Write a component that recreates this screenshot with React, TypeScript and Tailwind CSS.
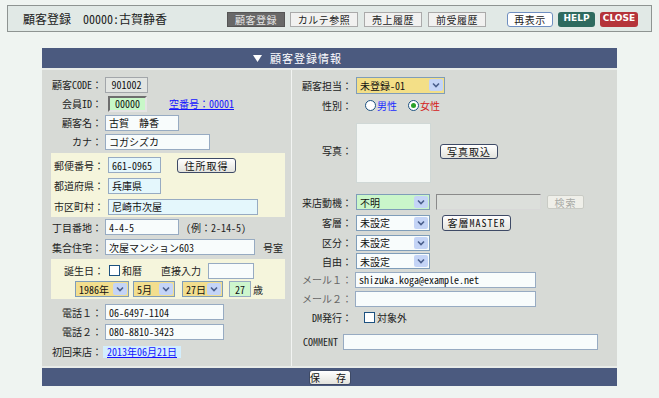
import { FC, ReactNode } from 'react';

type P = { className?: string; children?: ReactNode };

// 入力欄（表示のみ）
const Box: FC<P> = ({ className = '', children }) => (
  <div
    className={`flex h-[16px] items-center overflow-hidden whitespace-nowrap border px-[3px] text-[10px] text-[#111] ${className}`}
  >
    {children}
  </div>
);

// セレクトボックス（XP風）
const Select: FC<P> = ({ className = '', children }) => (
  <div className={`flex h-[16px] items-center border border-[#7f9db9] ${className}`}>
    <span className="flex-1 overflow-hidden whitespace-nowrap pl-[3px] text-[10px] text-[#111]">{children}</span>
    <span className="mr-px flex h-[12px] w-[14px] items-center justify-center rounded-[2px] bg-[#c4d4f6]">
      <svg width="8" height="6" viewBox="0 0 8 6">
        <path d="M1 1.5l3 3 3-3" stroke="#4a5f8c" strokeWidth="1.6" fill="none" />
      </svg>
    </span>
  </div>
);

const Btn: FC<P> = ({ className = '', children }) => (
  <div
    className={`flex h-[15px] items-center justify-center rounded-[3px] border border-[#3e4a66] bg-linear-to-b from-white to-[#e3e3dd] text-[10px] tracking-[1px] text-[#111] ${className}`}
  >
    {children}
  </div>
);

const Radio: FC<{ checked?: boolean }> = ({ checked }) => (
  <span className="flex h-[11px] w-[11px] items-center justify-center rounded-full border border-[#1c5180] bg-white">
    {checked && <span className="h-[5px] w-[5px] rounded-full bg-[#2aa12a]" />}
  </span>
);

const Check: FC<{ className?: string }> = ({ className = '' }) => (
  <span className={`h-[11px] w-[11px] border border-[#1c5180] bg-white ${className}`} />
);

// 左カラムの行
const LRow: FC<P & { label: string }> = ({ label, className = '', children }) => (
  <div className={`flex items-center ${className}`}>
    <div className="w-[60px] whitespace-nowrap text-right">{label}</div>
    <div className="ml-[3px] flex items-center">{children}</div>
  </div>
);

// 住所・誕生日ブロック内の行
const CRow: FC<P & { label: string }> = ({ label, className = '', children }) => (
  <div className={`flex items-center ${className}`}>
    <div className="w-[53px] whitespace-nowrap text-right">{label}</div>
    <div className="ml-[4px] flex items-center">{children}</div>
  </div>
);

// 右カラムの行
const RRow: FC<P & { label: string }> = ({ label, className = '', children }) => (
  <div className={`flex items-center ${className}`}>
    <div className="w-[60px] whitespace-nowrap text-right">{label}</div>
    <div className="ml-[4px] flex items-center">{children}</div>
  </div>
);

const inputBorder = 'border-[#97abc2] bg-[#f8fcfc]';

export default function App() {
  return (
    <div className="min-h-screen bg-[#eff4f1] pt-[5px] font-['Noto_Sans_Mono_CJK_JP','Noto_Sans_CJK_JP',sans-serif] text-[10px] text-[#222]">
      {/* ヘッダーバー */}
      <div className="mx-[7px] flex h-[27px] items-center border border-[#8e9492] bg-[#e1e9e6] pl-[15px] pr-[13px]">
        <span className="whitespace-nowrap text-[12px] text-[#222]">顧客登録　00000:古賀静香</span>
        <div className="ml-auto flex items-center pt-px text-[10px] tracking-[0.5px]">
          <div className="flex h-[15px] w-[58px] items-center justify-center border border-[#555] bg-[#686868] text-[#e6e6e6]">顧客登録</div>
          <div className="ml-[5px] flex h-[15px] w-[68px] items-center justify-center border border-[#aaa] bg-[#f1f1f0]">カルテ参照</div>
          <div className="ml-[6px] flex h-[15px] w-[58px] items-center justify-center border border-[#aaa] bg-[#f1f1f0]">売上履歴</div>
          <div className="ml-[6px] flex h-[15px] w-[58px] items-center justify-center border border-[#aaa] bg-[#f1f1f0]">前受履歴</div>
          <div className="ml-[21px] flex h-[15px] w-[46px] items-center justify-center rounded-[3px] border border-[#6f8fc0] bg-white">再表示</div>
          <div className="ml-[5px] flex h-[15px] w-[37px] items-center justify-center rounded-[3px] bg-[#2e6a5f] font-['DejaVu_Sans',sans-serif] text-[9px] font-bold tracking-normal text-white">HELP</div>
          <div className="ml-[5px] flex h-[15px] w-[38px] items-center justify-center rounded-[3px] bg-[#b5343a] font-['DejaVu_Sans',sans-serif] text-[9px] font-bold tracking-normal text-white">CLOSE</div>
        </div>
      </div>

      {/* 顧客登録情報パネル */}
      <div className="ml-[42px] mt-[16px] w-[575px]">
        <div className="flex h-[20px] items-center bg-[#4b5a7f] pl-[211px] text-[11px] tracking-[1px] text-white">
          <svg width="9" height="7" viewBox="0 0 9 7">
            <path d="M0 0h9L4.5 7z" fill="white" />
          </svg>
          <span className="ml-[8px]">顧客登録情報</span>
        </div>

        <div className="flex h-[298px] border-t-2 border-[#e8ebe8] bg-[#d7dad6]">
          {/* 左カラム */}
          <div className="w-[250px] border-r border-[#f2f4f2] pt-[5px]">
            <LRow label="顧客CODE：" className="h-[19px]">
              <Box className="w-[43px] justify-center border-[#a2a6aa] bg-[#e2e5e2]">901002</Box>
            </LRow>
            <LRow label="会員ID：" className="h-[19px]">
              <div className="ml-[3px] flex h-[16px] w-[39px] items-center justify-center border-2 border-b-[#e4e4e4] border-l-[#6e6e6e] border-r-[#e4e4e4] border-t-[#6e6e6e] bg-[#c8f8c8] text-[10px] text-[#111]">
                00000
              </div>
              <span className="ml-[22px] whitespace-nowrap text-[#1414ff] underline">空番号：00001</span>
            </LRow>
            <LRow label="顧客名：" className="h-[19px]">
              <Box className={`w-[74px] ${inputBorder}`}>古賀　静香</Box>
            </LRow>
            <LRow label="カナ：" className="h-[19px]">
              <Box className={`w-[105px] ${inputBorder}`}>コガシズカ</Box>
            </LRow>

            {/* 住所 */}
            <div className="ml-[9px] mt-[2px] w-[234px] bg-[#f5f5dc] pt-[2px]">
              <CRow label="郵便番号：" className="h-[20px]">
                <Box className="w-[53px] border-[#97abc2] bg-[#e4f7fc]">661-0965</Box>
                <Btn className="ml-[16px] w-[59px]">住所取得</Btn>
              </CRow>
              <CRow label="都道府県：" className="h-[21px]">
                <Box className="w-[53px] border-[#97abc2] bg-[#e4f7fc]">兵庫県</Box>
              </CRow>
              <CRow label="市区町村：" className="h-[21px]">
                <Box className="w-[150px] border-[#97abc2] bg-[#e4f7fc]">尼崎市次屋</Box>
              </CRow>
            </div>

            <LRow label="丁目番地：" className="h-[20px]">
              <Box className={`w-[74px] ${inputBorder}`}>4-4-5</Box>
              <span className="ml-[7px] whitespace-nowrap">(例：2-14-5)</span>
            </LRow>
            <LRow label="集合住宅：" className="h-[20px]">
              <Box className={`w-[150px] ${inputBorder}`}>次屋マンション603</Box>
              <span className="ml-[8px]">号室</span>
            </LRow>

            {/* 誕生日 */}
            <div className="ml-[9px] mt-[2px] w-[234px] bg-[#f5f5dc] pb-px pt-[2px]">
              <div className="flex h-[19px] items-center">
                <div className="w-[53px] text-right">誕生日：</div>
                <Check className="ml-[5px]" />
                <span className="ml-[2px]">和暦</span>
                <span className="ml-[19px]">直接入力</span>
                <Box className={`ml-[7px] h-[15px] w-[46px] ${inputBorder}`} />
              </div>
              <div className="flex h-[18px] items-center pl-[24px]">
                <Select className="w-[54px] bg-[#f2de8e]">1986年</Select>
                <Select className="ml-[4px] w-[42px] bg-[#f2de8e]">5月</Select>
                <Select className="ml-[7px] w-[41px] bg-[#f2de8e]">27日</Select>
                <Box className="ml-[6px] w-[22px] justify-center border-[#97abc2] bg-[#cdf6cd]">27</Box>
                <span className="ml-[2px]">歳</span>
              </div>
            </div>

            <LRow label="電話１：" className="mt-[3px] h-[20px]">
              <Box className={`w-[119px] ${inputBorder}`}>06-6497-1104</Box>
            </LRow>
            <LRow label="電話２：" className="h-[19px]">
              <Box className={`w-[119px] ${inputBorder}`}>080-8810-3423</Box>
            </LRow>
            <LRow label="初回来店：" className="h-[21px]">
              <span className="-ml-[2px] whitespace-nowrap bg-[#d3eefd] px-[4px] leading-[12px] text-[#1414ff] underline">2013年06月21日</span>
            </LRow>
          </div>

          {/* 右カラム */}
          <div className="flex-1 pt-[6px]">
            <RRow label="顧客担当：" className="h-[18px]">
              <Select className="h-[17px] w-[89px] bg-[#f3df87]">未登録-01</Select>
            </RRow>
            <RRow label="性別：" className="h-[22px]">
              <span className="ml-[9px]" />
              <Radio />
              <span className="ml-px text-[#1a2cff]">男性</span>
              <span className="ml-[11px]" />
              <Radio checked />
              <span className="ml-px text-[#d42020]">女性</span>
            </RRow>
            <div className="mt-[7px] flex items-center">
              <div className="mb-[6px] w-[60px] text-right">写真：</div>
              <div className="ml-[4px] h-[60px] w-[75px] border border-[#d0d8d6] bg-[#f3f7f5]" />
              <Btn className="mb-[3px] ml-[9px] w-[58px]">写真取込</Btn>
            </div>
            <RRow label="来店動機：" className="mt-[9px] h-[20px]">
              <Select className="w-[74px] bg-[#caf6ca]">不明</Select>
              <Box className="ml-[6px] w-[105px] border-b-[#d8d8d8] border-l-[#8a8a8a] border-r-[#d8d8d8] border-t-[#8a8a8a] bg-[#dcdfdb]" />
              <div className="ml-[6px] flex h-[14px] w-[37px] items-center justify-center rounded-[2px] border border-[#c9cbc5] bg-[#efefe9] tracking-[1px] text-[#a8aaa6]">
                検索
              </div>
            </RRow>
            <RRow label="客層：" className="h-[21px]">
              <Select className="w-[74px] bg-[#f8fcfc]">未設定</Select>
              <Btn className="ml-[12px] h-[16px] w-[69px] tracking-[0.5px]">客層MASTER</Btn>
            </RRow>
            <RRow label="区分：" className="h-[19px]">
              <Select className="w-[74px] bg-[#f8fcfc]">未設定</Select>
            </RRow>
            <RRow label="自由：" className="h-[18px]">
              <Select className="w-[74px] bg-[#f8fcfc]">未設定</Select>
            </RRow>
            <RRow label="メール１：" className="h-[19px] text-[#666]">
              <Box className={`-ml-px w-[181px] ${inputBorder}`}>shizuka.koga@example.net</Box>
            </RRow>
            <RRow label="メール２：" className="h-[19px] text-[#666]">
              <Box className={`-ml-px w-[181px] ${inputBorder}`} />
            </RRow>
            <RRow label="DM発行：" className="h-[19px]">
              <Check className="ml-[8px]" />
              <span className="ml-[2px]">対象外</span>
            </RRow>
            <div className="mt-[4px] flex h-[21px] items-center pl-[11px]">
              <span>COMMENT</span>
              <Box className={`ml-[5px] w-[255px] ${inputBorder}`} />
            </div>
          </div>
        </div>

        {/* フッター */}
        <div className="flex h-[20px] items-center justify-center border-t-2 border-[#e8ebe8] bg-[#4b5a7f]">
          <Btn className="h-[15px] w-[42px] rounded-[2px] border-[#2b3550] tracking-[3px]">保　存</Btn>
        </div>
      </div>
    </div>
  );
}
